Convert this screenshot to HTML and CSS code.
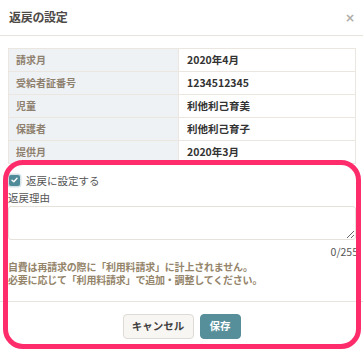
FILE: index.html
```html
<!DOCTYPE html>
<html lang="ja">
<head>
<meta charset="utf-8">
<link rel="stylesheet" href="styles.css">
</head>
<body>
<div class="modal">
  <div class="modal-header">
    <h2 class="modal-title">返戻の設定</h2>
    <span class="close">×</span>
  </div>
  <div class="modal-body">
    <table class="info">
      <tr><th>請求月</th><td>2020年4月</td></tr>
      <tr><th>受給者証番号</th><td>1234512345</td></tr>
      <tr><th>児童</th><td>利他利己育美</td></tr>
      <tr><th>保護者</th><td>利他利己育子</td></tr>
      <tr><th>提供月</th><td>2020年3月</td></tr>
    </table>
    <label class="check">
      <span class="box"><svg width="7" height="6" viewBox="0 0 7 6"><path d="M1 3.2 L2.8 4.8 L6 1.2" fill="none" stroke="#fff" stroke-width="1.4" stroke-linecap="round" stroke-linejoin="round"/></svg></span>
      <span>返戻に設定する</span>
    </label>
    <div class="field-label">返戻理由</div>
    <textarea class="reason"></textarea>
    <div class="counter">0/255</div>
    <p class="note">自費は再請求の際に「利用料請求」に計上されません。<br>必要に応じて「利用料請求」で追加・調整してください。</p>
  </div>
  <div class="modal-footer">
    <button class="btn btn-cancel">キャンセル</button>
    <button class="btn btn-save">保存</button>
  </div>
  <div class="highlight"></div>
</div>
</body>
</html>
```
FILE: styles.css
```css
* { box-sizing: border-box; }
html, body { margin: 0; padding: 0; background: #fff; }
body {
  font-family: "Noto Sans CJK JP", "Noto Sans", sans-serif;
  color: #555;
  width: 363px;
  height: 353px;
  overflow: hidden;
}
.modal { position: relative; width: 363px; height: 353px; }
.modal-header {
  height: 36px;
  border-bottom: 1px solid #e8e2dc;
  display: flex;
  align-items: center;
  justify-content: space-between;
  padding: 0 8px 2px 9px;
}
.modal-title {
  margin: 0;
  font-size: 12px;
  font-weight: 700;
  color: #4e4a47;
  letter-spacing: -0.3px;
  line-height: 1;
}
.close {
  font-family: "DejaVu Sans", sans-serif;
  font-size: 12px;
  font-weight: 700;
  color: #b0aca8;
  line-height: 1;
  margin-top: 3px;
}
.modal-body { padding: 12px 7px 0 8px; }
.info {
  width: 348px;
  border-collapse: collapse;
  font-size: 10px;
  margin-bottom: 8px;
}
.info th, .info td {
  border: 1px solid #ebe6e0;
  height: 23px;
  padding: 0 7px;
  text-align: left;
  line-height: 1;
  font-weight: 700;
}
.info th { width: 170px; background: #eef2f5; color: #8e806e; }
.info td { background: #fff; color: #333; font-size: 10.5px; padding-left: 8px; }
.check {
  display: flex;
  align-items: center;
  gap: 6px;
  font-size: 10.5px;
  color: #555;
  height: 16px;
  padding-left: 1px;
}
.box {
  width: 11px;
  height: 11px;
  border-radius: 2px;
  background: #4f8b99;
  box-shadow: 0 0 0 1.5px #d5e3e7;
  display: flex;
  align-items: center;
  justify-content: center;
}
.field-label {
  font-size: 10.5px;
  color: #555;
  line-height: 14px;
  margin-top: 3px;
}
.reason {
  display: block;
  width: 348px;
  height: 34px;
  margin: 1px 0 0;
  border: 1px solid #e6e1db;
  border-radius: 3px;
  resize: vertical;
  font-family: inherit;
}
.counter {
  text-align: right;
  font-size: 10.5px;
  color: #555;
  line-height: 14px;
  margin-top: 5px;
  margin-right: -2px;
}
.note {
  margin: 1px 0 0;
  font-size: 10px;
  line-height: 13px;
  color: #94846a;
  font-weight: 600;
  letter-spacing: -0.2px;
}
.modal-footer {
  position: absolute;
  left: 0; right: 0; top: 301px;
  border-top: 1px solid #e8e4df;
  display: flex;
  justify-content: center;
  gap: 6px;
  padding-top: 12px;
}
.btn {
  height: 25px;
  border-radius: 4px;
  font-family: inherit;
  font-size: 10.5px;
  font-weight: 700;
  line-height: 1;
  padding: 0 8px;
  cursor: pointer;
}
.btn-cancel {
  background: #f8f6f3;
  border: 1px solid #dedad5;
  color: #3f3f3f;
  width: 71px;
}
.btn-save {
  background: #568e9a;
  border: 1px solid #568e9a;
  color: #fff;
  width: 41px;
}
.highlight {
  position: absolute;
  left: 3px;
  top: 160px;
  width: 358px;
  height: 189px;
  border: 5.5px solid #ff2c6b;
  border-radius: 20px;
  pointer-events: none;
}
```
